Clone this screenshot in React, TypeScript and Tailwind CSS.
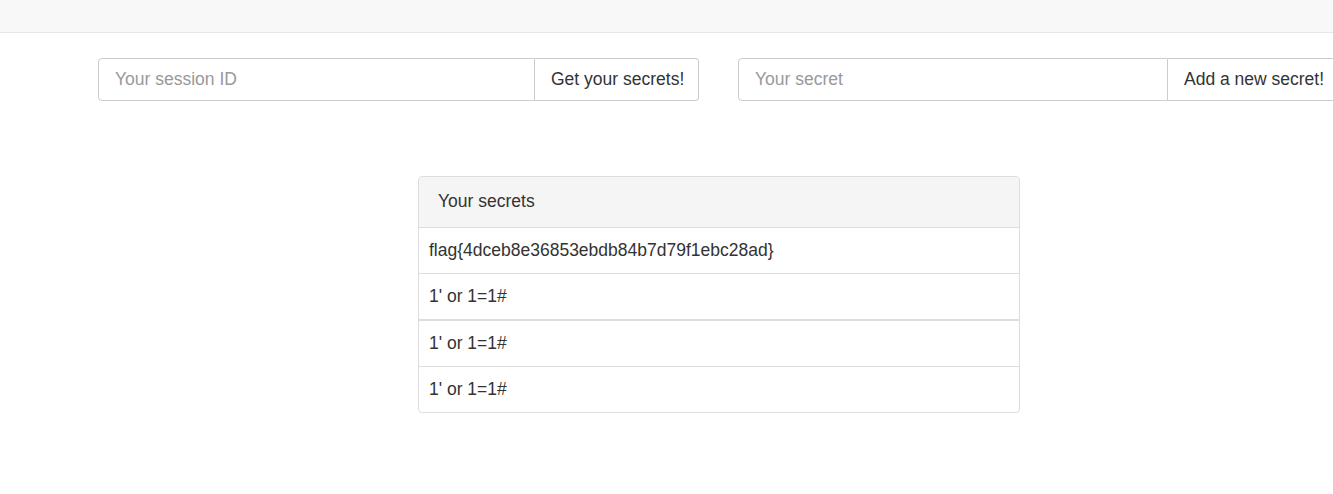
import React from "react";

const secrets = [
    "flag{4dceb8e36853ebdb84b7d79f1ebc28ad}",
    "1' or 1=1#",
    "1' or 1=1#",
    "1' or 1=1#",
];

const rowStyles = [
    "h-[45px]",
    "h-[46px] border-t border-[#ddd]",
    "h-[47px] border-t-2 border-[#ddd]",
    "h-[46px] border-t border-[#ddd]",
];

function InputGroup({
    placeholder,
    label,
    inputWidth,
    buttonWidth,
}: {
    placeholder: string;
    label: string;
    inputWidth: string;
    buttonWidth: string;
}) {
    return (
        <div className="flex h-[43px] shrink-0">
            <input
                placeholder={placeholder}
                className={`${inputWidth} h-full rounded-l-[4px] border border-[#ccc] bg-white px-4 text-[17.5px] text-[#555] placeholder:text-[#999] outline-none`}
            />
            <button
                className={`${buttonWidth} h-full whitespace-nowrap rounded-r-[4px] border border-l-0 border-[#ccc] bg-white pl-4 text-left text-[17.5px] text-[#333]`}
            >
                {label}
            </button>
        </div>
    );
}

export default function App() {
    return (
        <div
            className="min-h-[494px] w-[1333px] overflow-hidden bg-white text-[#333]"
            style={{ fontFamily: '"Liberation Sans", Arial, sans-serif' }}
        >
            <div className="h-[33px] border-b border-[#e7e7e7] bg-[#f8f8f8]" />

            <div className="mt-[25px] flex gap-[39px] pl-[98px]">
                <InputGroup
                    placeholder="Your session ID"
                    label="Get your secrets!"
                    inputWidth="w-[437px]"
                    buttonWidth="w-[164px]"
                />
                <InputGroup
                    placeholder="Your secret"
                    label="Add a new secret!"
                    inputWidth="w-[430px]"
                    buttonWidth="w-[172px]"
                />
            </div>

            <div className="ml-[418px] mt-[75px] w-[602px] overflow-hidden rounded-[4px] border border-[#ddd] text-[17.5px]">
                <div className="flex h-[51px] items-center border-b border-[#ddd] bg-[#f5f5f5] pb-[1px] pl-[19px]">
                    Your secrets
                </div>
                {secrets.map((s, i) => (
                    <div key={i} className={`flex items-center pl-[10px] ${rowStyles[i]}`}>
                        {s}
                    </div>
                ))}
            </div>
        </div>
    );
}
